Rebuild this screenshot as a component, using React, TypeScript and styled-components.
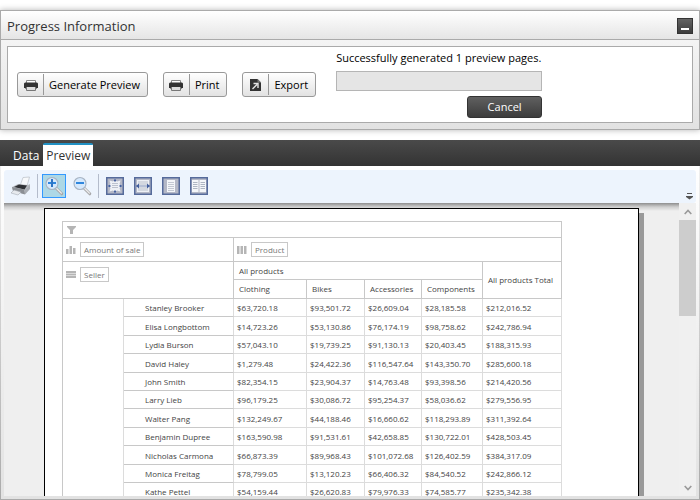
import React from "react";
import styled, { createGlobalStyle, css } from "styled-components";

const GlobalStyle = createGlobalStyle`
  *, *::before, *::after { box-sizing: border-box; }
  html, body { margin: 0; background: #fff; }
  body, button { font-family: "Open Sans", "Noto Sans", sans-serif; }
`;

const Screen = styled.div`
  display: flex;
  flex-direction: column;
  gap: 10px;
  height: 100vh;
  padding-top: 10px;
  overflow: hidden;
`;

/* ---------- progress panel ---------- */

const Panel = styled.section`
  flex: none;
  border: 1px solid #aaa;
  background: linear-gradient(#fafafa, #e2e2e2);
  box-shadow: 0 0 6px rgba(0, 0, 0, 0.3);
`;

const PanelHeader = styled.header`
  display: flex;
  align-items: center;
  justify-content: space-between;
  height: 29px;
  padding: 1px 6px 0;
  border-bottom: 1px solid #aaa;
  background: linear-gradient(#fff, #e5e5e5);
`;

const PanelTitle = styled.h1`
  margin: 0;
  font-size: 13px;
  line-height: 18px;
  font-weight: 400;
  color: #333;
`;

const MinimizeButton = styled.button`
  display: flex;
  align-items: flex-end;
  justify-content: center;
  width: 16px;
  height: 16px;
  padding: 0 0 3px;
  border: 1px solid #333;
  background: linear-gradient(#636363, #3c3c3c);

  &::before {
    content: "";
    width: 8px;
    height: 2px;
    background: #fff;
  }
`;

const PanelBody = styled.div`
  display: flex;
  align-items: flex-start;
  gap: 20px;
  height: 77px;
  margin: 6px;
  padding: 4px 9px;
  border: 1px solid #aaa;
  background: #fff;
`;

const Actions = styled.div`
  display: flex;
  gap: 15px;
  padding-top: 21px;
`;

const ActionButton = styled.button`
  display: flex;
  align-items: center;
  height: 25px;
  padding: 0 7px 0 0;
  border: 1px solid #999;
  border-radius: 3px;
  background: linear-gradient(#fff, #e2e2e2);
  font-size: 11px;
  line-height: 16px;
  color: #000;
  white-space: nowrap;
`;

const ActionIcon = styled.span`
  display: flex;
  align-items: center;
  justify-content: center;
  width: 26px;
  height: 21px;
  margin-right: 5px;
  border-right: 1px solid #999;
`;

const Status = styled.div`
  display: flex;
  flex-direction: column;
  align-items: flex-end;
  width: 206px;
`;

const StatusText = styled.label`
  align-self: stretch;
  font-size: 11px;
  line-height: 14px;
  color: #000;
  white-space: nowrap;
`;

const ProgressBar = styled.progress`
  appearance: none;
  display: block;
  width: 100%;
  height: 20px;
  margin: 6px 0 5px;
  border: 1px solid #b5b5b5;
  background: #e5e5e5;

  &::-webkit-progress-bar { background: #e5e5e5; }
  &::-webkit-progress-value { background: #25a0da; }
`;

const CancelButton = styled.button`
  width: 75px;
  height: 22px;
  padding: 0;
  border: 1px solid #333;
  border-radius: 3px;
  background: linear-gradient(#606060, #3c3c3c);
  font-size: 11px;
  line-height: 16px;
  color: #fff;
`;

/* ---------- viewer ---------- */

const Viewer = styled.main`
  display: flex;
  flex: 1;
  flex-direction: column;
  min-height: 0;
`;

const TabBar = styled.nav`
  display: flex;
  flex: none;
  gap: 1px;
  align-items: flex-end;
  height: 26px;
  padding-left: 10px;
  background: linear-gradient(#4a4a4a, #333);
`;

const Tab = styled.button<{ $active?: boolean }>`
  height: 23px;
  padding: 0 3px;
  border: 0;
  border-top: 2px solid transparent;
  background: transparent;
  font-size: 12px;
  line-height: 20px;
  color: #fff;
  ${(p) =>
    p.$active &&
    css`
      border-top-color: #2191c4;
      border-radius: 2px 2px 0 0;
      background: #fff;
      color: #333;
    `}
`;

const ViewerFrame = styled.div`
  display: flex;
  flex: 1;
  flex-direction: column;
  min-height: 0;
  padding: 4px 3px 3px;
  border: solid #aaa;
  border-width: 0 1px 1px;
  border-image: linear-gradient(#f0f0f0, #aaa) 1;
  background: linear-gradient(#fff, #e2e2e2);
`;

const Toolbar = styled.div`
  display: flex;
  flex: none;
  align-items: center;
  height: 33px;
  padding: 0 3px 2px 5px;
  border-radius: 3px;
  background: #edf4fd;
`;

const ToolButton = styled.button<{ $pressed?: boolean }>`
  display: flex;
  align-items: center;
  justify-content: center;
  width: 24px;
  height: 24px;
  padding: 0;
  border: 1px solid ${(p) => (p.$pressed ? "#3399ff" : "transparent")};
  background: ${(p) => (p.$pressed ? "#add8e6" : "transparent")};
`;

const ToolGroup = styled.div`
  display: flex;
  gap: 4px;
`;

const Separator = styled.span`
  width: 1px;
  height: 24px;
  margin: 0 4px;
  background: #b4bccb;
`;

const OverflowButton = styled.button`
  display: flex;
  align-self: flex-end;
  margin-left: auto;
  padding: 0 0 1px;
  border: 0;
  background: transparent;
`;

const Workspace = styled.div`
  display: flex;
  flex: 1;
  min-height: 0;
  background: #efefef;
`;

const Canvas = styled.div`
  display: flex;
  flex: 1;
  justify-content: center;
  min-width: 0;
  padding-top: 5px;
  overflow: hidden;
  background: linear-gradient(#8e8e8e, #cfcfcf 4px, #efefef 8px);
`;

const Paper = styled.article`
  flex: none;
  width: 595px;
  height: 842px;
  padding: 12px 76px 12px 17px;
  border: 1px solid #000;
  background: #fff;
  box-shadow: 5px 5px 0 #999;
`;

const ScrollTrack = styled.div`
  display: flex;
  flex: none;
  flex-direction: column;
  width: 17px;
  background: #f0f0f0;
`;

const ScrollButton = styled.button`
  display: flex;
  flex: none;
  align-items: center;
  justify-content: center;
  height: 17px;
  padding: 0;
  border: 0;
  background: transparent;
`;

const ScrollLane = styled.div`
  flex: 1;
`;

const ScrollThumb = styled.div`
  height: 37%;
  background: #cdcdcd;
`;

/* ---------- pivot table ---------- */

const PivotTable = styled.table`
  width: 100%;
  border: solid #c8c8c8;
  border-width: 1px 0 0 1px;
  border-spacing: 0;
  table-layout: fixed;
  font-size: 8px;
  line-height: 10px;
  color: #444;
`;

const Col = styled.col<{ $width: string }>`
  width: ${(p) => p.$width};
`;

const HeadCell = styled.th<{ $height: number; $top?: boolean }>`
  height: ${(p) => p.$height}px;
  padding: 0 0 0 5px;
  border: solid #c8c8c8;
  border-width: 0 1px 1px 0;
  font-weight: 400;
  text-align: left;
  white-space: nowrap;
  vertical-align: ${(p) => (p.$top ? "top" : "middle")};
`;

const ZoneCell = styled(HeadCell)`
  padding: ${(p) => (p.$top ? "5px" : "0")} 0 0 3px;
`;

const FieldRow = styled.div`
  display: flex;
  align-items: center;
  gap: 4px;
`;

const FieldChip = styled.span`
  height: 15px;
  padding: 0 3px;
  border: 1px solid #c8c8c8;
  line-height: 14px;
  color: #777;
`;

const DataRow = styled.tr`
  height: 18px;
  &:nth-child(5n + 2), &:nth-child(5n + 4) { height: 19px; }
`;

const RowLabel = styled.th`
  padding: 1px 0 0 21px;
  border: solid #c8c8c8;
  border-width: 0 1px 1px 0;
  border-right-color: #dcdcdc;
  font-weight: 400;
  text-align: left;
  white-space: nowrap;
`;

const GroupCell = styled.td`
  border-right: 1px solid #dcdcdc;
`;

const ValueCell = styled.td`
  padding: 1px 0 0 3px;
  border: solid #dcdcdc;
  border-width: 0 1px 1px 0;
`;

/* ---------- icons ---------- */

const PrinterIcon = () => (
  <svg width="14" height="12" viewBox="0 0 14 12" aria-hidden="true">
    <path d="M2.5 4V1.5h9V4" fill="#fff" stroke="#888" />
    <path d="M0 4.5 1 3.5h12l1 1V9h-1l-1 1H2L1 9H0z" fill="#333" />
    <path d="M3 8h8v3H3z" fill="#ddd" />
    <path d="M2.5 8v3.5h9V8" fill="none" stroke="#777" />
  </svg>
);

const ExportIcon = () => (
  <svg width="11" height="12" viewBox="0 0 11 12" aria-hidden="true">
    <path d="M0 0h7.5L11 3.5V12H0z" fill="#333" />
    <path d="M7.5 0v3.5H11z" fill="#777" />
    <path d="M2.5 10 7 5.5M3.5 4.5H8V9" fill="none" stroke="#e5e5e5" strokeWidth="1.4" />
  </svg>
);

const PrintToolIcon = () => (
  <svg width="20" height="20" viewBox="0 0 20 20" aria-hidden="true">
    <path d="M9 10 12 1.5 18.5 1 16 10z" fill="#f7f9fb" stroke="#b9bfc6" strokeWidth=".7" />
    <path d="m1 11 6-3 10 1 2-1v4l-5 6-12-3z" fill="#b8bcc1" />
    <path d="m3 11 5-2.5 8 1-2.5 4z" fill="#303236" />
    <path d="m1 11 12 2.5 1 5L2 15z" fill="#8b8f94" />
    <path d="m3 14 7 2-3 3-7-2z" fill="#e7eaee" stroke="#9ba1a8" strokeWidth=".5" />
    <path d="m14 14 5-5v4l-5 5.5z" fill="#a9adb3" />
  </svg>
);

const MagnifierIcon = ({ plus }: { plus?: boolean }) => (
  <svg width="20" height="20" viewBox="0 0 20 20" aria-hidden="true">
    <path d="m12 12 5.8 5.8" stroke="#a9a9ab" strokeWidth="3" strokeLinecap="round" />
    <path d="m12 11.7 5.4 5.4" stroke="#eeeeef" strokeWidth="1.3" strokeLinecap="round" />
    <circle cx="8" cy="7.5" r="6" fill="#d5e8fc" stroke="#a7b3c2" strokeWidth="1.1" />
    <path d="M4 7h8" stroke="#2f86dd" strokeWidth="2" />
    {plus && <path d="M8 3v8" stroke="#2f74c4" strokeWidth="2" />}
  </svg>
);

type PageMode = "whole" | "width" | "single" | "double";

const PageIcon = ({ mode }: { mode: PageMode }) => (
  <svg width="18" height="18" viewBox="0 0 18 18" aria-hidden="true">
    <path d="M.75.75h16.5v16.5H.75z" fill="#b4b8c6" stroke="#566b9b" strokeWidth="1.5" />
    {mode === "whole" && (
      <>
        <path
          d="M9 2 11 4.5 14.5 3.5 13.5 7 16 9 13.5 11 14.5 14.5 11 13.5 9 16 7 13.5 3.5 14.5 4.5 11 2 9 4.5 7 3.5 3.5 7 4.5z"
          fill="#eef1f6"
        />
        <path d="M6 6.5h6M6 8.5h6M6 10.5h6" stroke="#bcc2ce" />
        <path d="M2 9h3M13 9h3M9 2v3M9 13v3" stroke="#5a72a8" />
        <path d="M2 9l2-1.5v3zM16 9l-2-1.5v3zM9 2 7.5 4h3zM9 16l-1.5-2h3z" fill="#435f9d" />
      </>
    )}
    {mode === "width" && (
      <>
        <path d="M3 3h12v12H3z" fill="#edf0f5" />
        <path d="M4 5h10M4 7h10M4 11h10M4 13h10" stroke="#b9bfcb" />
        <path d="M2 9h14" stroke="#7f90b8" />
        <path d="m2 9 3-2.5v5zM16 9l-3-2.5v5z" fill="#435f9d" />
      </>
    )}
    {mode === "single" && (
      <>
        <path d="M5 3h8v12H5z" fill="#f4f6f9" />
        <path d="M6 5.5h6M6 7.5h6M6 9.5h6M6 11.5h6M6 13.5h6" stroke="#c3c8d2" />
      </>
    )}
    {mode === "double" && (
      <>
        <path d="M2 3h6.5v12H2zM9.5 3H16v12H9.5z" fill="#f4f6f9" />
        <path
          d="M3 5.5h4.5M3 7.5h4.5M3 9.5h4.5M3 11.5h4.5M10.5 5.5H15M10.5 7.5H15M10.5 9.5H15M10.5 11.5H15"
          stroke="#aeb5c2"
        />
      </>
    )}
  </svg>
);

const OverflowIcon = () => (
  <svg width="7" height="8" viewBox="0 0 7 8" aria-hidden="true">
    <path d="M1 1.5h5" stroke="#555" />
    <path d="M0 4h7v1L3.5 7.5 0 5z" fill="#555" />
  </svg>
);

const Chevron = ({ down }: { down?: boolean }) => (
  <svg width="8" height="6" viewBox="0 0 8 6" aria-hidden="true">
    <path d={down ? "M.7 1 4 4.5 7.3 1" : "M.7 5 4 1.5 7.3 5"} fill="none" stroke="#999" strokeWidth="1.6" />
  </svg>
);

type Zone = "filter" | "data" | "column" | "row";

const zonePaths: Record<Zone, string> = {
  filter: "M1 1h9v1L7 5v4H4V5L1 2z",
  data: "M0 4h2.5v5H0zM3.5 1H6v8H3.5zM7 3h2.5v6H7z",
  column: "M0 1h2.5v8H0zM3.5 1H6v8H3.5zM7 1h2.5v8H7z",
  row: "M0 1h10v2H0zM0 3.5h10v2H0zM0 6h10v2H0z",
};

const ZoneIcon = ({ zone }: { zone: Zone }) => (
  <svg width="10" height="10" viewBox="0 0 10 10" aria-hidden="true">
    <path d={zonePaths[zone]} fill="#b5b5b5" />
  </svg>
);

/* ---------- data ---------- */

const columnWidths = ["61px", "110px", "73px", "58px", "57px", "61px", "auto"];
const products = ["Clothing", "Bikes", "Accessories", "Components"];

const sellers: string[][] = [
  ["Stanley Brooker", "$63,720.18", "$93,501.72", "$26,609.04", "$28,185.58", "$212,016.52"],
  ["Elisa Longbottom", "$14,723.26", "$53,130.86", "$76,174.19", "$98,758.62", "$242,786.94"],
  ["Lydia Burson", "$57,043.10", "$19,739.25", "$91,130.13", "$20,403.45", "$188,315.93"],
  ["David Haley", "$1,279.48", "$24,422.36", "$116,547.64", "$143,350.70", "$285,600.18"],
  ["John Smith", "$82,354.15", "$23,904.37", "$14,763.48", "$93,398.56", "$214,420.56"],
  ["Larry Lieb", "$96,179.25", "$30,086.72", "$95,254.37", "$58,036.62", "$279,556.95"],
  ["Walter Pang", "$132,249.67", "$44,188.46", "$16,660.62", "$118,293.89", "$311,392.64"],
  ["Benjamin Dupree", "$163,590.98", "$91,531.61", "$42,658.85", "$130,722.01", "$428,503.45"],
  ["Nicholas Carmona", "$66,873.39", "$89,968.43", "$101,072.68", "$126,402.59", "$384,317.09"],
  ["Monica Freitag", "$78,799.05", "$13,120.23", "$66,406.32", "$84,540.52", "$242,866.12"],
  ["Kathe Pettel", "$54,159.44", "$26,620.83", "$79,976.33", "$74,585.77", "$235,342.38"],
];

const Pivot = () => (
  <PivotTable>
    <colgroup>
      {columnWidths.map((w, i) => (
        <Col key={i} $width={w} />
      ))}
    </colgroup>
    <thead>
      <tr>
        <ZoneCell colSpan={7} $height={16}>
          <FieldRow>
            <ZoneIcon zone="filter" />
          </FieldRow>
        </ZoneCell>
      </tr>
      <tr>
        <ZoneCell colSpan={2} $height={24}>
          <FieldRow>
            <ZoneIcon zone="data" />
            <FieldChip>Amount of sale</FieldChip>
          </FieldRow>
        </ZoneCell>
        <ZoneCell colSpan={5} $height={24}>
          <FieldRow>
            <ZoneIcon zone="column" />
            <FieldChip>Product</FieldChip>
          </FieldRow>
        </ZoneCell>
      </tr>
      <tr>
        <ZoneCell colSpan={2} rowSpan={2} $height={37} $top>
          <FieldRow>
            <ZoneIcon zone="row" />
            <FieldChip>Seller</FieldChip>
          </FieldRow>
        </ZoneCell>
        <HeadCell colSpan={4} $height={18}>
          All products
        </HeadCell>
        <HeadCell rowSpan={2} $height={37}>
          All products Total
        </HeadCell>
      </tr>
      <tr>
        {products.map((p) => (
          <HeadCell key={p} $height={19}>
            {p}
          </HeadCell>
        ))}
      </tr>
    </thead>
    <tbody>
      {sellers.map(([name, ...values], i) => (
        <DataRow key={name}>
          {i === 0 && <GroupCell rowSpan={sellers.length} />}
          <RowLabel scope="row">{name}</RowLabel>
          {values.map((v, j) => (
            <ValueCell key={j}>{v}</ValueCell>
          ))}
        </DataRow>
      ))}
    </tbody>
  </PivotTable>
);

export default function App() {
  return (
    <Screen>
      <GlobalStyle />
      <Panel>
        <PanelHeader>
          <PanelTitle>Progress Information</PanelTitle>
          <MinimizeButton aria-label="Minimize" />
        </PanelHeader>
        <PanelBody>
          <Actions>
            <ActionButton>
              <ActionIcon><PrinterIcon /></ActionIcon>
              Generate Preview
            </ActionButton>
            <ActionButton>
              <ActionIcon><PrinterIcon /></ActionIcon>
              Print
            </ActionButton>
            <ActionButton>
              <ActionIcon><ExportIcon /></ActionIcon>
              Export
            </ActionButton>
          </Actions>
          <Status>
            <StatusText htmlFor="progress">Successfully generated 1 preview pages.</StatusText>
            <ProgressBar id="progress" value={0} max={100} />
            <CancelButton>Cancel</CancelButton>
          </Status>
        </PanelBody>
      </Panel>

      <Viewer>
        <TabBar>
          <Tab>Data</Tab>
          <Tab $active>Preview</Tab>
        </TabBar>
        <ViewerFrame>
          <Toolbar>
            <ToolButton aria-label="Print"><PrintToolIcon /></ToolButton>
            <Separator />
            <ToolGroup>
              <ToolButton $pressed aria-label="Zoom in"><MagnifierIcon plus /></ToolButton>
              <ToolButton aria-label="Zoom out"><MagnifierIcon /></ToolButton>
            </ToolGroup>
            <Separator />
            <ToolGroup>
              <ToolButton aria-label="Whole page"><PageIcon mode="whole" /></ToolButton>
              <ToolButton aria-label="Page width"><PageIcon mode="width" /></ToolButton>
              <ToolButton aria-label="One page"><PageIcon mode="single" /></ToolButton>
              <ToolButton aria-label="Two pages"><PageIcon mode="double" /></ToolButton>
            </ToolGroup>
            <OverflowButton aria-label="More tools"><OverflowIcon /></OverflowButton>
          </Toolbar>
          <Workspace>
            <Canvas>
              <Paper>
                <Pivot />
              </Paper>
            </Canvas>
            <ScrollTrack>
              <ScrollButton aria-label="Scroll up"><Chevron /></ScrollButton>
              <ScrollLane>
                <ScrollThumb />
              </ScrollLane>
              <ScrollButton aria-label="Scroll down"><Chevron down /></ScrollButton>
            </ScrollTrack>
          </Workspace>
        </ViewerFrame>
      </Viewer>
    </Screen>
  );
}
